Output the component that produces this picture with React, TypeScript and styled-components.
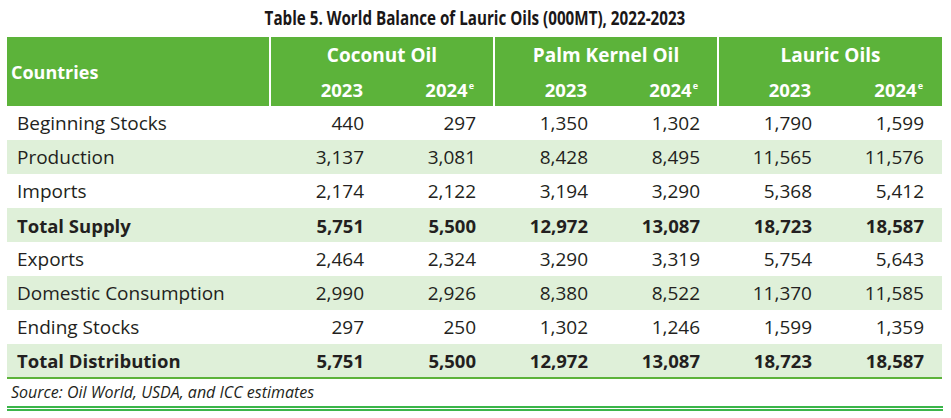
import React, { FC } from 'react';
import styled, { createGlobalStyle } from 'styled-components';

const GlobalStyle = createGlobalStyle`
	html, body {
		margin: 0;
		padding: 0;
		background: #ffffff;
	}
	body {
		font-family: 'Open Sans', 'Noto Sans', sans-serif;
		color: #231f20;
	}
`;

type Row = {
	label: string;
	values: string[];
	shaded?: boolean;
	total?: boolean;
};

const groups = ['Coconut Oil', 'Palm Kernel Oil', 'Lauric Oils'];

const rows: Row[] = [
	{ label: 'Beginning Stocks', values: ['440', '297', '1,350', '1,302', '1,790', '1,599'] },
	{ label: 'Production', values: ['3,137', '3,081', '8,428', '8,495', '11,565', '11,576'], shaded: true },
	{ label: 'Imports', values: ['2,174', '2,122', '3,194', '3,290', '5,368', '5,412'] },
	{ label: 'Total Supply', values: ['5,751', '5,500', '12,972', '13,087', '18,723', '18,587'], shaded: true, total: true },
	{ label: 'Exports', values: ['2,464', '2,324', '3,290', '3,319', '5,754', '5,643'] },
	{ label: 'Domestic Consumption', values: ['2,990', '2,926', '8,380', '8,522', '11,370', '11,585'], shaded: true },
	{ label: 'Ending Stocks', values: ['297', '250', '1,302', '1,246', '1,599', '1,359'] },
	{ label: 'Total Distribution', values: ['5,751', '5,500', '12,972', '13,087', '18,723', '18,587'], shaded: true, total: true },
];

const App: FC = () => (
	<>
		<GlobalStyle />
		<Page>
			<Title>
				<TitleText>Table 5. World Balance of Lauric Oils (000MT), 2022-2023</TitleText>
			</Title>
			<Table>
				<colgroup>
					<col style={{ width: 263 }} />
					{[0, 1, 2, 3, 4, 5].map((i) => (
						<col key={i} style={{ width: 112 }} />
					))}
				</colgroup>
				<thead>
					<tr>
						<CornerCell rowSpan={2}>Countries</CornerCell>
						{groups.map((g) => (
							<GroupCell key={g} colSpan={2}>
								{g}
							</GroupCell>
						))}
					</tr>
					<tr>
						{groups.map((g) => (
							<React.Fragment key={g}>
								<YearCell groupStart>2023</YearCell>
								<YearCell>
									2024<Sup>e</Sup>
								</YearCell>
							</React.Fragment>
						))}
					</tr>
				</thead>
				<tbody>
					{rows.map((row, idx) => (
						<BodyRow key={row.label} shaded={!!row.shaded} total={!!row.total} last={idx === rows.length - 1}>
							<LabelCell>{row.label}</LabelCell>
							{row.values.map((v, i) => (
								<NumCell key={i}>{v}</NumCell>
							))}
						</BodyRow>
					))}
				</tbody>
			</Table>
			<Source>Source: Oil World, USDA, and ICC estimates</Source>
			<DoubleRule />
		</Page>
	</>
);

const Page = styled.div`
	width: 936px;
	padding: 0 0 0 7px;
`;

const Title = styled.div`
	height: 37px;
	display: flex;
	justify-content: center;
	align-items: flex-start;
`;

const TitleText = styled.div`
	margin-top: 5px;
	font-family: 'Open Sans', sans-serif;
	font-weight: 700;
	font-size: 19px;
	line-height: 27px;
	color: #1a1718;
	transform: scaleX(0.8);
	white-space: nowrap;
`;

const Table = styled.table`
	width: 935px;
	border-collapse: collapse;
	table-layout: fixed;
	font-size: 19px;
`;

const HeadCell = styled.th`
	background: #5cb33a;
	color: #ffffff;
	font-weight: 700;
	font-size: 18.5px;
	padding: 0;
`;

const CornerCell = styled(HeadCell)`
	text-align: left;
	padding-left: 4px;
	height: 69px;
	font-size: 18px;
`;

const GroupCell = styled(HeadCell)`
	height: 35px;
	text-align: center;
	border-left: 2px solid #ffffff;
	font-size: 19px;
`;

const YearCell = styled(HeadCell)<{ groupStart?: boolean }>`
	height: 34px;
	text-align: right;
	padding-right: 19px;
	border-left: ${(p) => (p.groupStart ? '2px solid #ffffff' : 'none')};
`;

const Sup = styled.sup`
	font-size: 9px;
	vertical-align: 8px;
	line-height: 0;
	margin-left: 1px;
`;

const BodyRow = styled.tr<{ shaded: boolean; total: boolean; last: boolean }>`
	height: 34px;
	background: ${(p) => (p.shaded ? '#dff0d9' : '#ffffff')};
	font-weight: ${(p) => (p.total ? 700 : 400)};
	font-size: ${(p) => (p.total ? '18.5px' : '19px')};
	border-bottom: ${(p) => (p.last ? '2px solid #5cb33a' : 'none')};
`;

const LabelCell = styled.td`
	padding: 0 0 0 10px;
	white-space: nowrap;
`;

const NumCell = styled.td`
	padding: 0 18px 0 0;
	text-align: right;
`;

const Source = styled.div`
	font-style: italic;
	font-size: 16px;
	line-height: 26px;
	padding-left: 4px;
	height: 27px;
`;

const DoubleRule = styled.div`
	width: 936px;
	border-top: 5px double #3bb54a;
`;

export default App;
